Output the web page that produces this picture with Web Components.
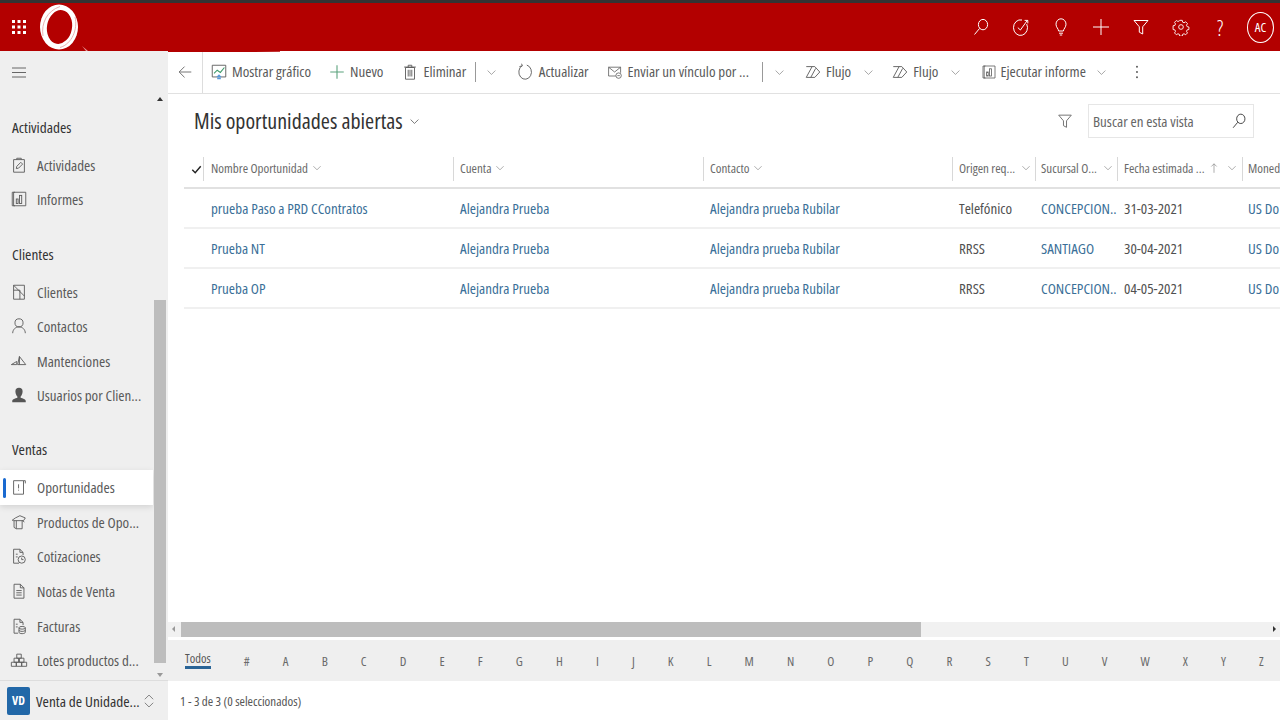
<!DOCTYPE html>
<html lang="es"><head><meta charset="utf-8"><title>Oportunidades</title>
<style>
html,body{margin:0;height:100%;overflow:hidden}
body{font-family:"Open Sans","Liberation Sans",sans-serif;font-stretch:75%;font-weight:400;color:#444}
</style></head><body>
<crm-app></crm-app>
<script>
const S='fill="none" stroke="currentColor" stroke-width="1"';
const I={
 waffle:'<g fill="currentColor"><rect x="3" y="3" width="3" height="3"/><rect x="8.5" y="3" width="3" height="3"/><rect x="14" y="3" width="3" height="3"/><rect x="3" y="8.5" width="3" height="3"/><rect x="8.5" y="8.5" width="3" height="3"/><rect x="14" y="8.5" width="3" height="3"/><rect x="3" y="14" width="3" height="3"/><rect x="8.5" y="14" width="3" height="3"/><rect x="14" y="14" width="3" height="3"/></g>',
 search:`<g ${S} stroke-width="1.3"><ellipse cx="12" cy="7.6" rx="4.6" ry="5.2"/><path d="M8.6 11.4 3.5 17.500"/></g>`,
 target:`<g ${S} stroke-width="1.3"><path d="M15.700 7A7 7.800 0 1 1 11 3"/><path d="M6.800 10.600 9.400 13 16.500 3.200"/><path d="M13.600 3.400h3.200v3"/></g>`,
 bulb:`<g ${S} stroke-width="1.3"><path d="M7.600 14C7.400 11.600 5 10.400 5 7.200a5 5.400 0 0 1 10 0c0 3.200-2.400 4.400-2.600 6.800z"/><path d="M8 16.200h4M8.800 18h2.400"/></g>`,
 plus:`<path d="M10 2v16M2 10h16" ${S} stroke-width="1.4"/>`,
 funnel:`<path d="M3 3.500h14l-5.300 6.300V17l-3.400-1.800V9.800z" ${S} stroke-width="1.4"/>`,
 funnel2:`<path d="M3 3.500h14l-5.300 6.300V17l-3.400-1.800V9.800z" ${S} stroke-width="1.100"/>`,
 gear:`<g ${S} stroke-width="1.200"><circle cx="10" cy="10" r="2.600"/><path d="M8.600 2.600h2.800l.4 2 1.600.7 1.800-1.100 2 2-1.100 1.800.7 1.600 2 .4v2.800l-2 .4-.7 1.600 1.100 1.800-2 2-1.800-1.100-1.600.7-.4 2H8.600l-.4-2-1.600-.7-1.800 1.100-2-2 1.100-1.800-.7-1.600-2-.4V8.600l2-.4.7-1.600-1.100-1.800 2-2 1.800 1.100 1.600-.7z"/></g>`,
 burger:`<path d="M3 5h14M3 9.500h14M3 14h14" ${S} stroke="#666" stroke-width="1.200"/>`,
 back:`<path d="M17 10H3.500M9.500 4l-6 6 6 6" ${S} stroke-width="1.100"/>`,
 chart:`<path d="M2.500 2.500h15v13h-15z" ${S} stroke="#555"/><path d="M4.500 11.500 8 8l3.500 2.500L16 5" fill="none" stroke="#3d9a6a" stroke-width="1.200"/><path d="M8 16h4v2H8zM7 15.500h6L10 12.500z" fill="#5a9ad9"/>`,
 newplus:`<path d="M10 2.500v15M2.500 10h15" fill="none" stroke="#5aa27c" stroke-width="1.200"/>`,
 trash:`<g ${S}><path d="M5 5h10v13H5zM3.500 4.500h13M8 4.500V2.500h4v2M8 7.500V15M12 7.500V15M10 7.500V15"/></g>`,
 refresh:`<g ${S} stroke-width="1.100"><path d="M12 2.300A7 8 0 1 1 6.800 3"/><path d="M6.200 .8 7 3.200 3.800 4"/></g>`,
 mail:`<g ${S}><path d="M2 4h15v7M2 4v11h9"/><path d="M2 4l7.500 6L17 4"/><circle cx="14.500" cy="14.500" r="3.400"/><path d="M13 14.500h3"/></g>`,
 flow:`<g ${S} stroke-width="1.200"><path d="M2.500 4H12l5.500 6-5.500 6H2.500"/><path d="M9 4 2.500 16M13 6 7.500 16"/></g>`,
 report:`<g ${S}><path d="M4 2.500h13.500v15H4z"/><path d="M2.500 2.500h3M2.500 17.500h3M2.500 2.500v15"/><rect x="7" y="10" width="2" height="5"/><rect x="10.500" y="6" width="2.500" height="9"/></g>`,
 more:'<g fill="currentColor"><circle cx="10" cy="3.500" r="1.200"/><circle cx="10" cy="10" r="1.200"/><circle cx="10" cy="16.500" r="1.200"/></g>',
 chev:`<path d="M4 7l6 6 6-6" ${S}/>`,
 titlechev:`<path d="M4 7l6 6 6-6" ${S} stroke-width="1.700"/>`,
 check:'<path d="M3.500 10.500 8 15 16.500 5" fill="none" stroke="#222" stroke-width="2.200"/>',
 up:`<path d="M10 18V3M5.500 7.500 10 3l4.500 4.500" ${S}/>`,
 clip:`<g ${S} stroke="#555" stroke-width="1.200"><path d="M4 4h12v14H4z"/><path d="M7.500 4V2.500h5V4M7 14l.5-2.500 4.500-4.500 2 2-4.500 4.500z"/></g>`,
 acct:`<g ${S} stroke="#555" stroke-width="1.200"><path d="M4 2.500h12V18H4z"/><path d="M4 8h7v10M4 2.500l12 12"/></g>`,
 person:`<g ${S} stroke="#555" stroke-width="1.200"><circle cx="10" cy="6.500" r="4.500"/><path d="M3 18c0-4 3-7 7-7s7 3 7 7"/></g>`,
 wrench:`<g ${S} stroke="#666"><path d="M1.500 14l6-3.500V14zM8.500 14l2-9 7 9zM10.500 5v9"/></g>`,
 solid:'<path d="M10 2a4 4 0 0 1 4 4c0 3-1.600 5-2.200 5.700V13c2 .8 5.700 1.600 5.700 3.600V18h-15v-1.400c0-2 3.700-2.800 5.700-3.600v-1.300C7.600 11 6 9 6 6a4 4 0 0 1 4-4z" fill="#555"/>',
 opp:`<g ${S} stroke="#555" stroke-width="1.200"><path d="M4 3h11v15H4z"/><path d="M9.500 7v4.500M9.500 13v1"/><path d="M15 3h2v3"/></g>`,
 box:`<g ${S} stroke="#555" stroke-width="1.100"><path d="M6 5.500 11 3l6 2.500-2 3H4L2.500 8zM4.500 8.500V16l2.500 1.500V8.500M7 17.500h6.500V8.500M14 8.500l2 1.500"/></g>`,
 quote:`<g ${S} stroke="#555" stroke-width="1.100"><path d="M10 18H4V2.500h7l3.500 3.500v3"/><path d="M11 2.500V6h3.500M6.500 8h2M6.500 11h2"/><circle cx="13" cy="14" r="4"/><path d="M13 11.800V14h2"/></g>`,
 doc:`<g ${S} stroke="#555" stroke-width="1.100"><path d="M4.500 2.500h7l4 4V18h-11z"/><path d="M11.500 2.500v4h4M7 9.500h6M7 12h6M7 14.500h6"/></g>`,
 inv:`<g ${S} stroke="#555" stroke-width="1.100"><path d="M9 18H4.500V2.500h6.500l3.500 3.500v3"/><path d="M11 2.500V6h3.500M6.500 8h2M6.500 11h2"/><ellipse cx="13.500" cy="12" rx="3.500" ry="1.500"/><path d="M10 12v5c0 .8 1.500 1.500 3.500 1.500S17 17.800 17 17v-5M10 14.500c0 .8 1.500 1.500 3.500 1.500s3.500-.7 3.500-1.500"/></g>`,
 lots:`<g ${S} stroke="#555"><path d="M7.500 3.500h5v4.500h-5zM4.500 8h5v4.500h-5zM10.500 8h5v4.500h-5zM1.500 12.500h5.500V17H1.500zM7 12.500h6V17H7zM13 12.500h5.500V17H13z"/></g>`,
 updown:`<path d="M4 7.500l6-6 6 6M4 12.500l6 6 6-6" ${S}/>`
};
const ic=(n,s=20,c='')=>`<svg width="${s}" height="${s}" viewBox="0 0 20 20" aria-hidden="true" style="flex:none;display:block;${c}">${I[n]}</svg>`;
function def(name,css,html){customElements.define(name,class extends HTMLElement{
 connectedCallback(){if(this.shadowRoot)return;const r=this.attachShadow({mode:'open'});
  r.innerHTML=`<style>${css}</style>`+(typeof html==='function'?html(this):html);}
});}

def('top-bar',`:host{display:flex;align-items:center;height:48px;background:#b30000;border-top:3px solid #333;color:#fff;position:relative;flex:none}
 .w{margin-left:9px;width:20px}.logo{position:absolute;left:38px;top:0}
 .r{margin-left:auto;display:flex;align-items:center}
 .b{width:40px;display:flex;justify-content:center}
 .ac{width:27px;height:31px;border:1px solid #fff;border-radius:50%;font-size:13px;display:flex;align-items:center;justify-content:center;margin:0 6px;box-sizing:border-box}
 .q{font-size:22px;line-height:22px;font-weight:300;padding-right:2px;box-sizing:border-box}
 .notch{position:absolute;left:80px;top:43px}`,
 ()=>`<div class="w">${ic('waffle')}</div>
 <svg class="logo" width="44" height="48" viewBox="0 0 44 48"><ellipse cx="21" cy="24" rx="19" ry="22.500" fill="#fff"/><ellipse cx="21.500" cy="24" rx="12.500" ry="17" transform="rotate(10 21.500 24)" fill="#b30000"/><path d="M5 33C3 20 9 8 22 3.500" fill="none" stroke="#e8a8a8" stroke-width=".9"/><path d="M37 14c3 12-3 27-15 30.500" fill="none" stroke="#e8a8a8" stroke-width=".9"/></svg>
 <svg class="notch" width="200" height="6" viewBox="0 0 200 6"><path d="M2 0 6 5h2z" fill="#e79a9a"/><path d="M6 5 14 6H200V5.300L90 4z" fill="#b30000"/></svg>
 <div class="r"><div class="b">${ic('search')}</div><div class="b">${ic('target')}</div><div class="b">${ic('bulb')}</div><div class="b">${ic('plus')}</div><div class="b">${ic('funnel')}</div><div class="b">${ic('gear',18)}</div><div class="b q">?</div><div class="ac">AC</div></div>`);

def('nav-group',`:host{display:block;font-size:15.300px;color:#333;font-weight:500}
 div{height:20px;line-height:20px;padding-left:12px}`,`<div><slot></slot></div>`);
def('nav-item',`:host{display:flex;align-items:center;height:34.6px;font-size:15px;color:#5a5a5a;position:relative;padding-left:10px;box-sizing:border-box}
 span{margin-left:9px;white-space:nowrap}
 :host([sel]){background:#fff;box-shadow:0 2px 6px rgba(0,0,0,.12)}
 :host([sel])::before{content:"";position:absolute;left:3px;top:8px;height:20px;width:3px;background:#1a6ad0;border-radius:2px}`,
 h=>`${ic(h.getAttribute('icon'),18)}<span><slot></slot></span>`);
def('side-bar',`:host{display:flex;flex-direction:column;width:168px;background:#efefef;flex:none;position:relative}
 .top{height:43px;padding:12px 0 0 9px;box-sizing:border-box;color:#666}
 .scroll{height:586px;display:flex;flex:none}
 .nav{width:153px;margin-right:1px;padding-top:23px;box-sizing:border-box}
 nav-group{margin-bottom:10.600px}
 .sp{height:27px}.sp2{height:26.6px}
 .sb{width:12px;position:relative;margin-right:2px}
 .thumb{position:absolute;top:206px;height:363px;left:0;right:0;background:#bdbdbd}
 .ua,.da{position:absolute;left:3px;width:0;height:0;border:3px solid transparent}
 .ua{top:3px;border-bottom:4px solid #333;border-top:0}
 .da{bottom:3px;border-top:4px solid #999;border-bottom:0}
 .foot{height:40px;flex:none;display:flex;align-items:center;border-top:1px solid #ddd;box-sizing:border-box;padding-left:7px}
 .vd{width:23px;height:28px;background:#2268a8;color:#fff;border-radius:2px;font-size:12px;font-weight:700;display:flex;align-items:center;justify-content:center}
 .nm{font-size:15.300px;font-weight:500;color:#333;margin-left:6px;white-space:nowrap;width:106px}`,
 ()=>`<div class="top">${ic('burger',20)}</div>
 <div class="scroll"><div class="nav">
 <nav-group>Actividades</nav-group>
 <nav-item icon="clip">Actividades</nav-item><nav-item icon="report">Informes</nav-item>
 <div class="sp"></div>
 <nav-group>Clientes</nav-group>
 <nav-item icon="acct">Clientes</nav-item><nav-item icon="person">Contactos</nav-item><nav-item icon="wrench">Mantenciones</nav-item><nav-item icon="solid">Usuarios por Clien...</nav-item>
 <div class="sp2"></div>
 <nav-group>Ventas</nav-group>
 <nav-item icon="opp" sel>Oportunidades</nav-item><nav-item icon="box">Productos de Opo...</nav-item><nav-item icon="quote">Cotizaciones</nav-item><nav-item icon="doc">Notas de Venta</nav-item><nav-item icon="inv">Facturas</nav-item><nav-item icon="lots">Lotes productos d...</nav-item>
 </div><div class="sb"><i class="ua"></i><div class="thumb"></div><i class="da"></i></div></div>
 <div class="foot"><div class="vd">VD</div><div class="nm">Venta de Unidade...</div>${ic('updown',14,'color:#555')}</div>`);

def('cmd-btn',`:host{display:flex;align-items:center;font-size:15px;color:#5a5a5a;white-space:nowrap;margin-left:var(--ml,0)}
 span{margin-left:var(--gap,4px);padding-bottom:2px}`,h=>`${ic(h.getAttribute('icon'),h.getAttribute('size')||18)}<span><slot></slot></span>`);
def('cmd-bar',`:host{display:flex;align-items:center;height:43px;border-bottom:1px solid #e1e1e1;box-sizing:border-box;flex:none;color:#555}
 .bk{width:35px;height:100%;display:flex;align-items:center;justify-content:center;border-right:1px solid #ddd;box-sizing:border-box;color:#666}
 .sep{width:1px;height:20px;background:#999}
 .ch{color:#777}`,
 ()=>`<div class="bk">${ic('back',18)}</div>
 <cmd-btn icon="chart" style="--ml:7px;--gap:4px">Mostrar gráfico</cmd-btn>
 <cmd-btn icon="newplus" style="--ml:17px;--gap:4px">Nuevo</cmd-btn>
 <cmd-btn icon="trash" style="--ml:18px;--gap:4px">Eliminar</cmd-btn>
 <div class="sep" style="margin-left:9px"></div><div class="ch" style="margin-left:8.5px">${ic('chev',13)}</div>
 <cmd-btn icon="refresh" style="--ml:18.5px;--gap:4.5px">Actualizar</cmd-btn>
 <cmd-btn icon="mail" size="16" style="--ml:18px;--gap:5px">Enviar un vínculo por ...</cmd-btn>
 <div class="sep" style="margin-left:13px"></div><div class="ch" style="margin-left:9.5px">${ic('chev',13)}</div>
 <cmd-btn icon="flow" style="--ml:18.5px;--gap:4px">Flujo</cmd-btn><div class="ch" style="margin-left:10.5px">${ic('chev',13)}</div>
 <cmd-btn icon="flow" style="--ml:16.5px;--gap:4px">Flujo</cmd-btn><div class="ch" style="margin-left:10.5px">${ic('chev',13)}</div>
 <cmd-btn icon="report" size="16" style="--ml:19px;--gap:3.5px">Ejecutar informe</cmd-btn><div class="ch" style="margin-left:9.5px">${ic('chev',13)}</div>
 <div style="margin-left:20.5px;color:#555">${ic('more',16)}</div>`);

def('view-head',`:host{display:flex;align-items:center;height:57px;padding-left:26px;padding-bottom:3px;flex:none;box-sizing:border-box;color:#333}
 h1{font-size:22px;font-weight:400;margin:0;white-space:nowrap;line-height:27px;padding-bottom:1px}
 .chv{margin-left:5px;color:#333}
 .f{margin-left:auto;color:#666}
 .s{width:166px;height:34px;border:1px solid #e6e6e6;box-sizing:border-box;margin:0 26px 0 14.5px;display:flex;align-items:center;padding:0 5px 0 4px;justify-content:space-between;font-size:15px;color:#666;white-space:nowrap}`,
 ()=>`<h1>Mis oportunidades abiertas</h1><div class="chv">${ic('titlechev',13)}</div>
 <div class="f">${ic('funnel2',18)}</div><div class="s"><span>Buscar en esta vista</span>${ic('search',18,'color:#333')}</div>`);

const cols='19px 250px 250px 249px 83px 82px 125px 1fr';
def('grid-head',`:host{display:grid;grid-template-columns:${cols};height:38px;align-items:center;border-bottom:2px solid #e1e1e1;box-sizing:border-box;margin-left:16px;flex:none;font-size:13px;color:#6a6a6a;white-space:nowrap;overflow:hidden}
 .c{display:flex;align-items:center;height:24px;border-left:1px solid #d8d8d8;padding-left:6px;padding-bottom:2px;box-sizing:border-box;overflow:hidden}
 .c svg{color:#777;margin-left:3px}
 .e{justify-content:space-between;padding-right:3px}
 .ck{padding-left:6px}`,
 ()=>{const h=(t,e,s='')=>`<div class="c ${e?'e':''}" style="${s}"><span>${t}</span>${e||''}</div>`;const ch=ic('chev',12);
 return `<div class="ck">${ic('check',13)}</div>${h('Nombre Oportunidad','','padding-left:7px').replace('</span>','</span>'+ch)}${h('Cuenta').replace('</span>','</span>'+ch)}${h('Contacto').replace('</span>','</span>'+ch)}${h('Origen req...',ch)}${h('Sucursal O...',ch,'padding-left:5px')}<div class="c e" style="padding-right:7px"><span>Fecha estimada ...</span><span style="display:flex">${ic('up',12)}<span style="width:3px"></span>${ch}</span></div><div class="c" style="padding-left:5px">Moned</div>`});
def('grid-row',`:host{display:grid;grid-template-columns:${cols};height:40px;align-items:center;border-bottom:2px solid #f0f0f0;box-sizing:border-box;margin-left:16px;font-size:15px;color:#505050;white-space:nowrap;overflow:hidden}
 :host>div{padding-left:7px;overflow:hidden}
 a{color:#3a6f98;text-decoration:none}`,
 h=>{const d=JSON.parse(h.dataset.v);return `<div></div><div style="padding-left:8px"><a>${d[0]}</a></div><div><a>Alejandra Prueba</a></div><div><a>Alejandra prueba Rubilar</a></div><div>${d[1]}</div><div style="padding-left:6px;"><a>${d[2]}</a></div><div>${d[3]}</div><div style="padding-left:6px"><a>US Do</a></div>`});
def('h-scroll',`:host{display:block;height:15px;background:#f1f1f1;position:relative;flex:none;margin-top:auto}
 .t{position:absolute;left:13px;width:740px;top:0;bottom:0;background:#bdbdbd}
 i{position:absolute;top:4px;width:0;height:0;border:3px solid transparent}
 .l{left:4px;border-right:3px solid #999;border-left:0}.r{right:4px;border-left:3px solid #333;border-right:0}`,`<i class="l"></i><div class="t"></div><i class="r"></i>`);
def('jump-bar',`:host{display:flex;justify-content:space-between;align-items:center;height:41px;background:#efefef;box-sizing:border-box;padding:1px 16px 0 17px;margin-top:3px;font-size:13px;color:#6a6a6a;flex:none}
 .t{border-bottom:3px solid #2a6496;line-height:15px;margin-top:-3px;color:#555;font-size:12.5px}`,
 ()=>`<span class="t">Todos</span>`+'#ABCDEFGHIJKLMNOPQRSTUVWXYZ'.split('').map(c=>`<span>${c}</span>`).join(''));
def('foot-bar',`:host{display:flex;align-items:center;height:39px;padding-left:12px;font-size:13px;color:#555;flex:none}`,`<slot></slot>`);
def('crm-app',`:host{display:flex;flex-direction:column;width:1280px;height:720px;overflow:hidden}
 .body{display:flex;flex:1;min-height:0}
 .main{flex:1;display:flex;flex-direction:column;min-width:0}`,
 ()=>`<top-bar></top-bar><div class="body"><side-bar></side-bar><div class="main"><cmd-bar></cmd-bar><view-head></view-head><grid-head></grid-head>
 <grid-row data-v='["prueba Paso a PRD CContratos","Telefónico","CONCEPCION..","31-03-2021"]'></grid-row>
 <grid-row data-v='["Prueba NT","RRSS","SANTIAGO","30-04-2021"]'></grid-row>
 <grid-row data-v='["Prueba OP","RRSS","CONCEPCION..","04-05-2021"]'></grid-row>
 <h-scroll></h-scroll><jump-bar></jump-bar><foot-bar>1 - 3 de 3 (0 seleccionados)</foot-bar></div></div>`);
</script></body></html>
